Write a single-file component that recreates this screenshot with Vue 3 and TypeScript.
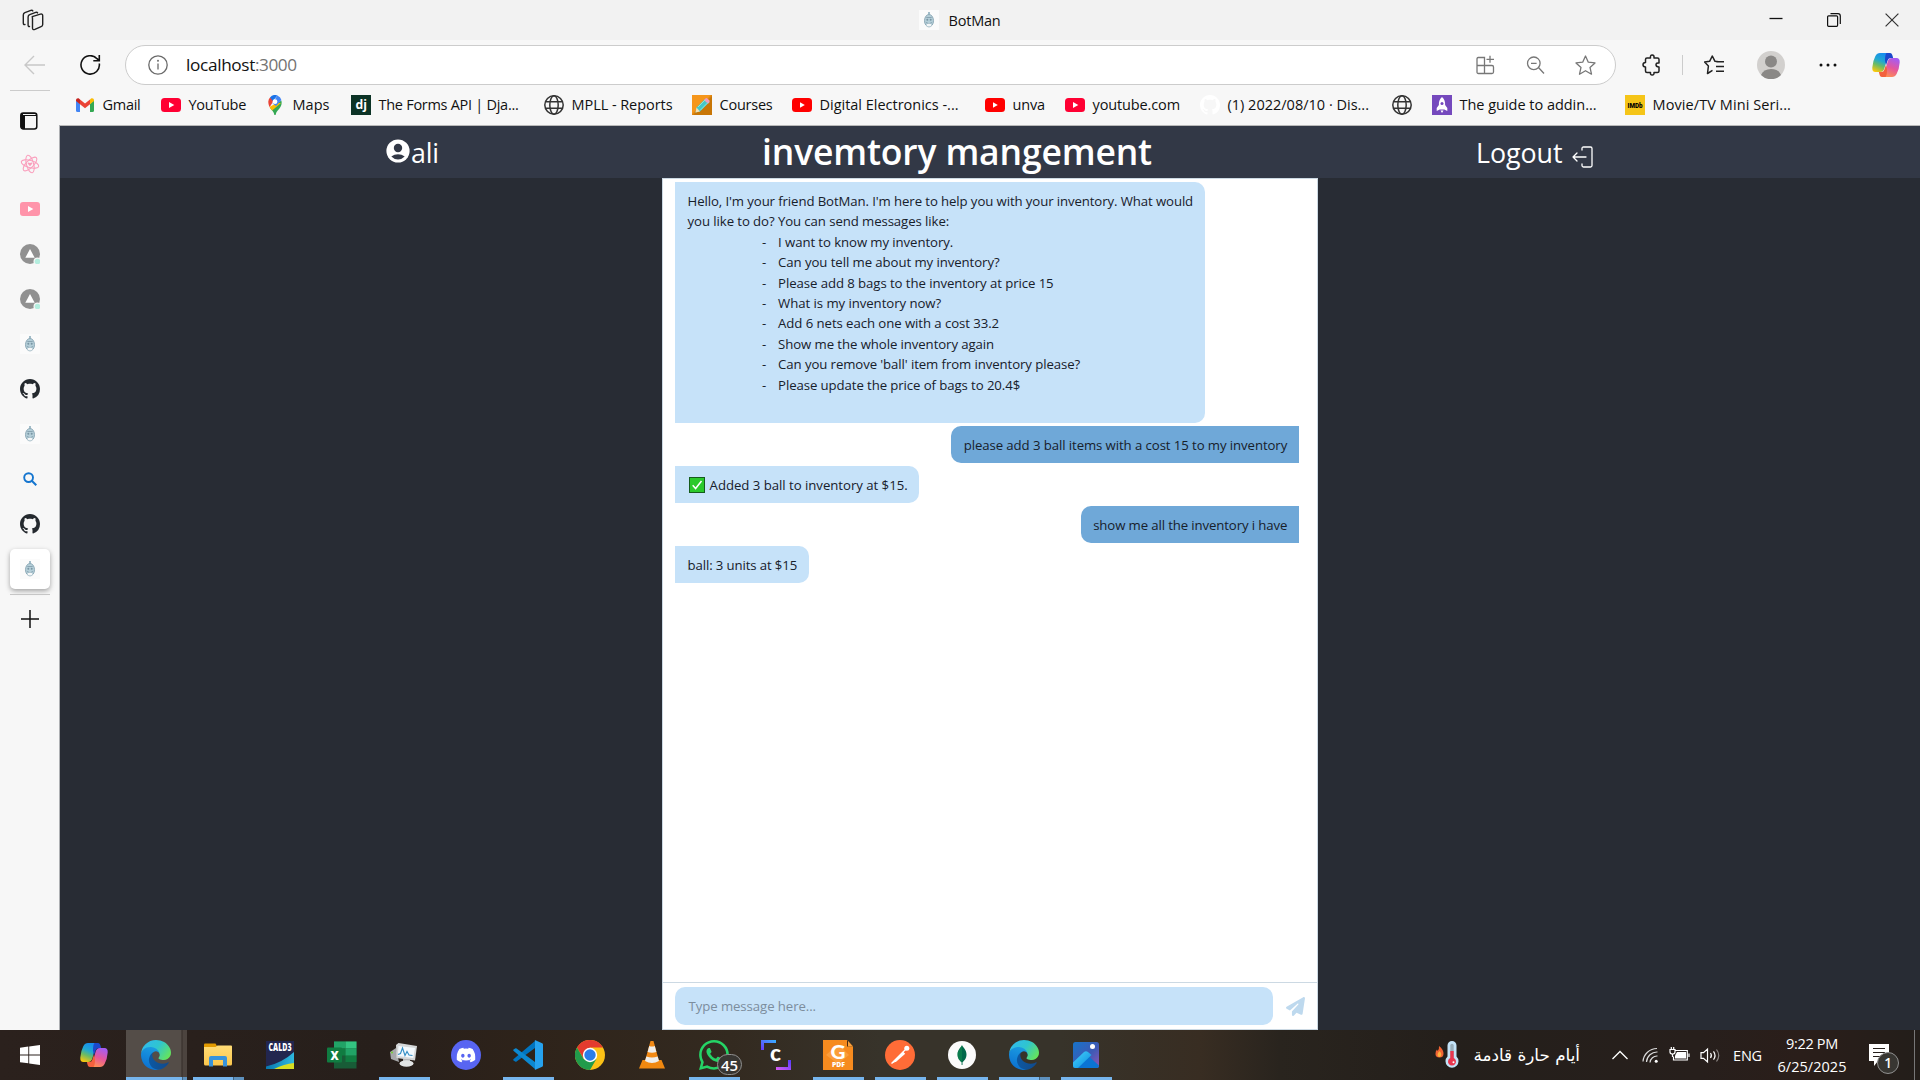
<script setup lang="ts">
interface Bookmark { icon: string; label: string; width: number; text: number }
interface Message { from: 'bot' | 'me'; lines: { text: string; width: number; item?: boolean }[]; check?: boolean; tail?: boolean }
interface Task { icon: string; w: number; h: number; state?: 'open' | 'active' | 'stack' }
interface Glyph { text: string; x: number; y: number; size: number; length: number; weight: number; fill: string; font: string }

/* Adjusts tracking so a label occupies the given number of pixels. */
const vFit = {
  mounted(el: HTMLElement, binding: { value: number }) {
    const length = (el.textContent ?? '').trim().length
    const natural = el.getBoundingClientRect().width
    if (length && binding.value) el.style.letterSpacing = `${(binding.value - natural) / length}px`
  },
}

/* Lettering that sits on top of a logo, in the logo's own pixels. */
const glyphs: Record<string, Glyph[]> = {
  django: [{ text: 'dj', x: 4.5, y: 14.2, size: 13, length: 11.5, weight: 700, fill: '#fff', font: 'Open Sans' }],
  imdb: [{ text: 'IMDb', x: 2.5, y: 12.8, size: 8, length: 15, weight: 900, fill: '#000', font: 'Roboto' }],
  cald: [{ text: 'CALD3', x: 2.5, y: 10, size: 10, length: 23, weight: 800, fill: '#fff', font: 'Open Sans' }],
  excel: [{ text: 'X', x: 3.4, y: 18.5, size: 12.5, length: 8.2, weight: 800, fill: '#fff', font: 'Open Sans' }],
  clip: [{ text: 'c', x: 9, y: 20.5, size: 22, length: 11, weight: 900, fill: '#fff', font: 'Lato' }],
  foxit: [
    { text: 'G', x: 7.5, y: 18.5, size: 19.5, length: 15, weight: 900, fill: '#fff', font: 'Lato' },
    { text: 'PDF', x: 9, y: 27.4, size: 6.2, length: 13, weight: 800, fill: '#fff', font: 'Open Sans' },
  ],
}

const bookmarks: Bookmark[] = [
  { icon: 'gmail', label: 'Gmail', width: 86, text: 38 },
  { icon: 'youtube', label: 'YouTube', width: 104, text: 57.5 },
  { icon: 'maps', label: 'Maps', width: 86, text: 37 },
  { icon: 'django', label: 'The Forms API | Dja...', width: 193, text: 140 },
  { icon: 'globe', label: 'MPLL - Reports', width: 148, text: 101 },
  { icon: 'pencil', label: 'Courses', width: 100, text: 53 },
  { icon: 'youtube-red', label: 'Digital Electronics -...', width: 193, text: 139 },
  { icon: 'youtube-red', label: 'unva', width: 80, text: 32.5 },
  { icon: 'youtube', label: 'youtube.com', width: 135, text: 87.5 },
  { icon: 'github-white', label: '(1) 2022/08/10 · Dis...', width: 192, text: 141.5 },
  { icon: 'globe', label: '', width: 40, text: 0 },
  { icon: 'rocket', label: 'The guide to addin...', width: 193, text: 137 },
  { icon: 'imdb', label: 'Movie/TV Mini Seri...', width: 193, text: 138.5 },
]

const sideTabs = ['tabs', 'react', 'youtube-pink', 'deploy', 'deploy', 'bot', 'github', 'bot', 'search', 'github', 'bot']

const messages: Message[] = [
  {
    from: 'bot',
    tail: true,
    lines: [
      { text: "Hello, I'm your friend BotMan. I'm here to help you with your inventory. What would", width: 505.5 },
      { text: 'you like to do? You can send messages like:', width: 261.5 },
      { text: 'I want to know my inventory.', width: 175, item: true },
      { text: 'Can you tell me about my inventory?', width: 221.5, item: true },
      { text: 'Please add 8 bags to the inventory at price 15', width: 275.5, item: true },
      { text: 'What is my inventory now?', width: 163, item: true },
      { text: 'Add 6 nets each one with a cost 33.2', width: 221, item: true },
      { text: 'Show me the whole inventory again', width: 216, item: true },
      { text: "Can you remove 'ball' item from inventory please?", width: 302, item: true },
      { text: 'Please update the price of bags to 20.4$', width: 242, item: true },
    ],
  },
  { from: 'me', lines: [{ text: 'please add 3 ball items with a cost 15 to my inventory', width: 323.5 }] },
  { from: 'bot', check: true, lines: [{ text: 'Added 3 ball to inventory at $15.', width: 198 }] },
  { from: 'me', lines: [{ text: 'show me all the inventory i have', width: 194 }] },
  { from: 'bot', lines: [{ text: 'ball: 3 units at $15', width: 109.5 }] },
]

const tasks: Task[] = [
  { icon: 'copilot', w: 28, h: 26 },
  { icon: 'edge', w: 30, h: 30, state: 'active' },
  { icon: 'explorer', w: 28, h: 24, state: 'stack' },
  { icon: 'cald', w: 28, h: 28 },
  { icon: 'excel', w: 30, h: 28 },
  { icon: 'monitor', w: 28, h: 28, state: 'open' },
  { icon: 'discord', w: 30, h: 30 },
  { icon: 'vscode', w: 30, h: 30, state: 'open' },
  { icon: 'chrome', w: 30, h: 30 },
  { icon: 'vlc', w: 26, h: 28 },
  { icon: 'whatsapp', w: 30, h: 30, state: 'open' },
  { icon: 'clip', w: 30, h: 30 },
  { icon: 'foxit', w: 30, h: 30, state: 'open' },
  { icon: 'postman', w: 30, h: 30, state: 'open' },
  { icon: 'mongo', w: 28, h: 28, state: 'open' },
  { icon: 'edge', w: 30, h: 30, state: 'stack' },
  { icon: 'photos', w: 26, h: 26, state: 'open' },
]
</script>

<template>
  <div class="screen">
    <svg class="defs" width="0" height="0" aria-hidden="true">
      <defs>
        <linearGradient id="edge-a" x1="0" y1="0" x2="1" y2="0"><stop offset="0" stop-color="#0c59a4" /><stop offset="1" stop-color="#114a8b" /></linearGradient>
        <linearGradient id="edge-b" x1=".6" y1="0" x2=".3" y2="1"><stop offset="0" stop-color="#1b9de2" /><stop offset="1" stop-color="#0b6fd0" /></linearGradient>
        <linearGradient id="edge-c" x1="0" y1=".2" x2="1" y2=".7"><stop offset="0" stop-color="#30b9ef" /><stop offset=".5" stop-color="#2fc5cf" /><stop offset="1" stop-color="#66e45a" /></linearGradient>
        <linearGradient id="cop-a" x1=".6" y1="0" x2=".2" y2="1"><stop offset="0" stop-color="#168bf0" /><stop offset=".4" stop-color="#22a9d0" /><stop offset=".65" stop-color="#6dbb63" /><stop offset="1" stop-color="#ffc809" /></linearGradient>
        <linearGradient id="cop-b" x1=".7" y1="0" x2=".3" y2="1"><stop offset="0" stop-color="#a45cf5" /><stop offset=".5" stop-color="#e5569b" /><stop offset="1" stop-color="#ff9250" /></linearGradient>
        <linearGradient id="clip-a" x1="0" y1="1" x2="1" y2="0"><stop offset="0" stop-color="#6a35ff" /><stop offset="1" stop-color="#35b4ff" /></linearGradient>
        <linearGradient id="clip-b" x1="0" y1="1" x2="1" y2="0"><stop offset="0" stop-color="#dc5df0" /><stop offset="1" stop-color="#523bff" /></linearGradient>
        <linearGradient id="photo-a" x1="0" y1="0" x2="1" y2="1"><stop offset="0" stop-color="#1674ca" /><stop offset=".55" stop-color="#3d5ab5" /><stop offset="1" stop-color="#9155b5" /></linearGradient>
        <linearGradient id="photo-b" x1="0" y1="0" x2="1" y2="1"><stop offset="0" stop-color="#48d3f8" /><stop offset="1" stop-color="#078be2" /></linearGradient>
        <linearGradient id="folder" x1="0" y1="0" x2="0" y2="1"><stop offset="0" stop-color="#ffdc76" /><stop offset="1" stop-color="#fbc74d" /></linearGradient>
        <linearGradient id="cald-a" x1="0" y1="0" x2="1" y2="0"><stop offset="0" stop-color="#0878ae" /><stop offset="1" stop-color="#2eb8df" /></linearGradient>
        <linearGradient id="pencil-bg" x1="0" y1="0" x2="1" y2="1"><stop offset=".45" stop-color="#f5961b" /><stop offset=".55" stop-color="#c87606" /></linearGradient>
      </defs>

      <symbol id="gmail" viewBox="0 0 20 20"><path fill="#4285f4" d="M1 5.500 5 8.700V17H2.500A1.500 1.500 0 0 1 1 15.500z" /><path fill="#34a853" d="M15 8.700l4-3.200v10a1.500 1.500 0 0 1-1.500 1.500H15z" /><path fill="#fbbc04" d="m15 4.500.8-.7C17.200 2.700 19 3.600 19 5.300v.7l-4 3.200z" /><path fill="#c5221f" d="M1 5.300C1 3.600 2.900 2.700 4.200 3.800L5 4.500v4.700L1 6z" /><path fill="#ea4335" d="m5 4.500 5 3.900 5-3.900v4.700l-5 4-5-4z" /></symbol>
      <symbol id="youtube" viewBox="0 0 20 20"><rect y="3" width="20" height="14" rx="3.500" fill="#ff0033" /><path d="m8 7 5.300 3L8 13z" fill="#fff" /></symbol>
      <symbol id="youtube-red" viewBox="0 0 20 20"><rect y="3" width="20" height="14" rx="3.500" fill="#f00" /><path d="m8 7.300 4.800 2.700L8 12.700z" fill="#fff" /></symbol>
      <symbol id="youtube-pink" viewBox="0 0 20 20"><rect y="3" width="20" height="14" rx="3" fill="#ff94aa" /><path d="m8 7 5.300 3L8 13z" fill="#fff" /></symbol>
      <symbol id="maps" viewBox="0 0 20 20"><path fill="#34a853" d="M10 20c.7 0 .8-.7 1-1.600.7-2.700 4.500-5 5.400-8.700.4-1.500.3-3-.1-4.200L5.300 13.200C7 15.500 8.500 16.800 9 18.400c.2.900.3 1.600 1 1.600z" /><path fill="#fbbc04" d="m11.900 7.800-7.400 4.300a12 12 0 0 0 2.600 3.400L16 8z" /><path fill="#ea4335" d="M3.300 6.400c0 2.200.5 4 1.400 5.700l4-6.600L5.200 2.200a6.500 6.500 0 0 0-1.900 4.200z" /><path fill="#1a73e8" d="M5 2.400A6.600 6.600 0 0 1 12.500.5L7.900 6z" /><path fill="#4285f4" d="M12.300.4A6.600 6.600 0 0 1 16.400 5l-5.400 6-3.400-2.800z" /><circle cx="10" cy="6.700" r="2.400" fill="#fff" /></symbol>
      <symbol id="django" viewBox="0 0 20 20"><path fill="#0c3326" d="M0 0h20v20H0z" /></symbol>
      <symbol id="globe" viewBox="0 0 20 20"><g fill="none" stroke="#333" stroke-width="1.500"><circle cx="10" cy="10" r="9.200" /><ellipse cx="10" cy="10" rx="4.200" ry="9.200" /><path d="M1.500 6.700h17M1.500 13.300h17" /></g></symbol>
      <symbol id="pencil" viewBox="0 0 20 20"><path fill="url(#pencil-bg)" d="M0 0h20v20H0z" /><path d="m3.500 17.500 1-5 8.500-8.500 4 3.500-9 9z" fill="#45c7c7" /><path d="m3.500 17.500 1-5 3.500 4z" fill="#f6dcb0" /><path d="m12 5 1.700-1.700q1-.5 2 .4l1.500 1.500q.9 1 .2 2L16 8.700z" fill="#ee9dc0" /><path d="m6 12 7-7M8 15.500l8-8" stroke="#8be6dc" /></symbol>
      <symbol id="github" viewBox="0 0 16 16"><path fill="currentColor" d="M8 0C3.580 0 0 3.580 0 8c0 3.540 2.290 6.530 5.470 7.590.4.070.55-.17.55-.38 0-.19-.01-.82-.01-1.490-2.010.37-2.530-.49-2.690-.94-.09-.23-.48-.94-.82-1.130-.28-.15-.68-.52-.01-.53.63-.01 1.080.58 1.230.82.72 1.210 1.870.87 2.330.66.07-.52.28-.87.51-1.070-1.780-.2-3.640-.89-3.640-3.950 0-.87.31-1.590.82-2.150-.08-.2-.36-1.020.08-2.120 0 0 .67-.21 2.200.82.64-.18 1.320-.27 2-.27.68 0 1.360.09 2 .27 1.530-1.040 2.200-.82 2.200-.82.44 1.100.16 1.920.08 2.120.51.56.82 1.270.82 2.150 0 3.070-1.870 3.750-3.650 3.950.29.25.54.73.54 1.480 0 1.070-.01 1.930-.01 2.200 0 .21.15.46.55.38A8.013 8.013 0 0016 8c0-4.420-3.580-8-8-8z" /></symbol>
      <symbol id="github-white" viewBox="0 0 16 16"><use href="#github" color="#fff" /></symbol>
      <symbol id="rocket" viewBox="0 0 20 20"><path fill="#7549bd" d="M0 0h20v20H0z" /><path fill="#fff" d="M10 2c2.600 2.300 3.300 5 3.100 8l2.200 3v3l-3-1.500H7.700l-3 1.500v-3L6.900 10C6.700 7 7.400 4.300 10 2zM8.500 15.500h3L10 18z" /><circle cx="10" cy="8.500" r="1.500" fill="#7549bd" /></symbol>
      <symbol id="imdb" viewBox="0 0 20 20"><path fill="#f5c518" d="M0 0h20v20H0z" /></symbol>
      <symbol id="bot" viewBox="0 0 20 20"><path fill="#fbfbfb" d="M0 0h20v20H0z" /><path d="M10 2v3" stroke="#8caebd" stroke-width="1.600" /><ellipse cx="10" cy="10.700" rx="4.500" ry="6.200" fill="#b4ced8" stroke="#8fabb8" stroke-width="1" /><path d="M7.300 7.500h5.400M7 12.500q3 2.500 6 0" fill="none" stroke="#7c99a8" stroke-width=".8" /><circle cx="8.300" cy="9.700" r="1" fill="#7895a4" /><circle cx="11.700" cy="9.700" r="1" fill="#7895a4" /><ellipse cx="10" cy="15" rx="2.500" ry="1.500" fill="#f4f7f8" /></symbol>
      <symbol id="tabs" viewBox="0 0 20 20"><rect x="1.800" y="2" width="16" height="16" rx="2.500" fill="none" stroke="#111" stroke-width="1.500" /><path d="M2 4q0-2 2-2h12q2 0 2 2v1H6v13H4q-2 0-2-2z" fill="#111" /><path d="M4 3.500h12.500" stroke="#f7f7f7" stroke-width="1" /></symbol>
      <symbol id="react" viewBox="0 0 20 20"><g fill="none" stroke="#fa9fbd" stroke-width="1.100"><ellipse cx="10" cy="10" rx="9" ry="3.600" transform="rotate(15 10 10)" /><ellipse cx="10" cy="10" rx="9" ry="3.600" transform="rotate(75 10 10)" /><ellipse cx="10" cy="10" rx="9" ry="3.600" transform="rotate(135 10 10)" /></g><path d="M10 12.200 7.600 9.600q.2-1.700 2.400-.5 2.200-1.200 2.400.5z" fill="#fa9fbd" /></symbol>
      <symbol id="deploy" viewBox="0 0 20 20"><circle cx="10" cy="10" r="10" fill="#919191" /><path d="m10 5 4.700 8.800H5.300z" fill="#fff" /><circle cx="17.500" cy="17.500" r="4" fill="#f7f7f7" /><circle cx="17.500" cy="17.500" r="2.800" fill="#b5eedf" /></symbol>
      <symbol id="search" viewBox="0 0 20 20"><circle cx="8.600" cy="8.600" r="4.400" fill="none" stroke="#1475cf" stroke-width="1.900" /><path d="m12 12 4.300 4.300" stroke="#1475cf" stroke-width="2" /></symbol>

      <symbol id="copilot" viewBox="0 0 28 26"><path fill="url(#cop-a)" d="M8 1h10.500q-2 0-3 3.500l-3 11.500q-1 4-4.500 4H3.500Q0 20 .3 15.500.8 9 3.300 4.300 5 1 8 1z" /><path fill="#1b48cc" d="M14.500 1h3.300c2.200 0 2.700 2 3.300 5h-2.500q-2.300 0-3 2.500L14 13.500l-1-5q0-6 1.500-7.500z" /><path fill="url(#cop-b)" d="M20 25H9.500q2 0 3-3.500l3-11.500q1-4 4.500-4h4.500q3.500 0 3.200 4.500-.5 6.500-3 11.200Q23 25 20 25z" /><path fill="#f3613e" d="M13.500 25h-3.300c-2.200 0-2.700-2-3.300-5h2.500q2.300 0 3-2.500l1.600-5 1 5q0 6-1.500 7.500z" /></symbol>
      <symbol id="edge" viewBox="0 0 256 256"><path fill="url(#edge-a)" d="M231 190.500c-3.400 1.800-6.900 3.400-10.500 4.700a101.500 101.500 0 0 1-35.900 6.500c-47.300 0-88.500-32.500-88.500-74.300.1-11.400 6.400-21.900 16.400-27.300-42.800 1.800-53.800 46.400-53.800 72.500 0 74 68.100 81.400 82.800 81.400 7.900 0 19.800-2.300 27-4.600l1.300-.4a128.300 128.300 0 0 0 66.600-52.800 4 4 0 0 0-5.400-5.700z" /><path fill="url(#edge-b)" d="M105.700 241.400a79.200 79.200 0 0 1-22.700-21.300 80.700 80.700 0 0 1 29.500-120c3.200-1.500 8.500-4.100 15.600-4a32.400 32.400 0 0 1 25.700 13 31.900 31.900 0 0 1 6.300 18.700c0-.2 24.500-79.600-80-79.600-43.900 0-80 41.600-80 78.200a130.200 130.200 0 0 0 12.100 56 128 128 0 0 0 156.400 67 75.500 75.500 0 0 1-62.800-8z" /><path fill="url(#edge-c)" d="M152.300 148.900c-.9 1-3.400 2.500-3.400 5.600 0 2.600 1.700 5.200 4.800 7.300 14.300 10 41.400 8.600 41.500 8.600a59.600 59.600 0 0 0 30.300-8.300 61.400 61.400 0 0 0 30.400-52.900c.3-22.400-8-37.300-11.300-43.900C223.500 23.900 177.700 0 128 0A128 128 0 0 0 0 126.200c.5-36.500 36.800-66 80-66 3.500 0 23.500.3 42 10.100 16.300 8.600 24.900 18.900 30.800 29.200 6.200 10.700 7.300 24.100 7.300 29.500s-2.700 13.300-7.800 19.900z" /></symbol>
      <symbol id="explorer" viewBox="0 0 28 24"><path fill="#e29a00" d="M0 1.500Q0 .5 1 .5h10.500l2 3.500H0z" /><path fill="url(#folder)" d="M0 4h11.500l2-1.500H27q1 0 1 1V21q0 1.500-1.500 1.500h-25Q0 22.500 0 21z" /><path fill="#3793db" d="M5 15q0-2 2-2h14q2 0 2 2v8.500h-4V17H9v6.500H5z" /></symbol>
      <symbol id="cald" viewBox="0 0 28 28"><path fill="#22264f" d="M0 0h28v28H0z" /><path fill="url(#cald-a)" d="M0 25.500Q16 22 28 11v12q-10 2-17 5H0z" /><path fill="#d7dd22" d="M8 28q10-5 20-6v6z" /></symbol>
      <symbol id="excel" viewBox="0 0 30 28"><path fill="#185c37" d="M7 .5h22.500v27H7z" /><path fill="#21a366" d="M7 .5h11.500v7H7z" /><path fill="#33c481" d="M18.500.5h11v7h-11z" /><path fill="#107c41" d="M7 7.500h11.500v7H7zM18.500 14.500h11v6.500h-11z" /><path fill="#21a366" d="M18.500 7.500h11v7h-11z" /><rect y="6.500" width="15" height="15" rx="1" fill="#107c41" /></symbol>
      <symbol id="monitor" viewBox="0 0 28 28"><path fill="#a7a9ab" d="m0 11 6-4 3 14-8-3z" /><path fill="#d5d7d8" d="m6 4 2.500-2L27 5l-2 14.500L6.500 17z" /><path fill="#f3f9fd" d="m8.500 5 16.500 2-1.700 10L7.800 15z" /><path fill="none" stroke="#338ec5" stroke-width="1.100" d="m8 13.500 2.500-1 2-5.500 2.500 7.500 2-4 2 3.500 3.500.5" /><path fill="#b4b7b8" d="M13 18h7v4h-7z" /><ellipse cx="16.500" cy="22.500" rx="7" ry="3.300" fill="#e2e4e5" /><circle cx="2" cy="11.500" r="1" fill="#71d42d" /></symbol>
      <symbol id="discord" viewBox="0 0 30 30"><circle cx="15" cy="15" r="15" fill="#5865f2" /><svg x="5.500" y="5.500" width="19" height="19" viewBox="0 0 16 16"><path fill="#fff" d="M13.545 2.907a13.227 13.227 0 0 0-3.257-1.011.05.05 0 0 0-.052.025c-.141.25-.297.577-.406.833a12.190 12.190 0 0 0-3.658 0 8.258 8.258 0 0 0-.412-.833.051.051 0 0 0-.052-.025c-1.125.194-2.220.534-3.257 1.011a.041.041 0 0 0-.021.018C.356 6.024-.213 9.047.066 12.032c.001.014.01.028.021.037a13.276 13.276 0 0 0 3.995 2.020.05.05 0 0 0 .056-.019c.308-.42.582-.863.818-1.329a.05.05 0 0 0-.028-.07 8.875 8.875 0 0 1-1.248-.595.05.05 0 0 1-.005-.085c.084-.063.168-.129.248-.195a.05.05 0 0 1 .051-.007c2.619 1.196 5.454 1.196 8.041 0a.052.052 0 0 1 .053.007c.08.066.164.132.248.195a.051.051 0 0 1-.004.085 8.254 8.254 0 0 1-1.249.594.05.05 0 0 0-.027.071c.24.465.515.909.817 1.329a.05.05 0 0 0 .056.019 13.235 13.235 0 0 0 4.001-2.020.049.049 0 0 0 .021-.037c.334-3.451-.559-6.449-2.366-9.106a.034.034 0 0 0-.020-.019Zm-8.198 7.307c-.789 0-1.438-.724-1.438-1.612 0-.889.637-1.613 1.438-1.613.807 0 1.450.73 1.438 1.613 0 .888-.637 1.612-1.438 1.612Zm5.316 0c-.788 0-1.438-.724-1.438-1.612 0-.889.637-1.613 1.438-1.613.807 0 1.451.73 1.438 1.613 0 .888-.631 1.612-1.438 1.612Z" /></svg></symbol>
      <symbol id="vscode" viewBox="0 0 30 30"><path fill="#0074bf" d="M.4 19.200 22 1v7L3.600 21.500q-.8.500-1.500 0L.5 20.500q-.5-.6-.1-1.300z" /><path fill="#0c88d0" d="M.4 10.800 22 29v-7L3.600 8.500q-.8-.5-1.500 0L.5 9.500q-.5.600-.1 1.300z" /><path fill="#26a2ee" d="m21.800 0 7.400 3.200q.8.500.8 1.300v21q0 .8-.8 1.300L21.800 30q.2-.5.200-2V2q0-1.500-.2-2z" /></symbol>
      <symbol id="chrome" viewBox="0 0 30 30"><circle cx="15" cy="15" r="15" fill="#fbc116" /><path fill="#e33b2e" d="M2 7.500A15 15 0 0 1 28 7.500H15l-6.500 11z" /><path fill="#219b4b" d="M2 7.500a15 15 0 0 0 13 22.500l6.500-11.300L15 22l-6.500-3.300z" /><circle cx="15" cy="15" r="7.200" fill="#fff" /><circle cx="15" cy="15" r="5.700" fill="#2b7de9" /></symbol>
      <symbol id="vlc" viewBox="0 0 26 28"><path fill="#f08810" d="M3.500 19h19L26 27.500H0z" /><path fill="#f28a15" d="M11.500 0h3L20 20q-7 3.500-14 0z" /><path fill="#eeeeec" d="m10.200 5-1.600 6q4.400 1.500 8.800 0l-1.600-6q-2.800 1-5.600 0zM7.300 15.500 6 20q7 4 14 0l-1.300-4.500q-5.700 2-11.400 0z" /></symbol>
      <symbol id="whatsapp" viewBox="0 0 16 16"><path fill="#25d366" d="M13.601 2.326A7.854 7.854 0 0 0 7.994 0C3.627 0 .068 3.558.064 7.926c0 1.399.366 2.760 1.057 3.965L0 16l4.204-1.102a7.933 7.933 0 0 0 3.790.965h.004c4.368 0 7.926-3.558 7.930-7.930A7.898 7.898 0 0 0 13.600 2.326zM7.994 14.521a6.573 6.573 0 0 1-3.356-.92l-.24-.144-2.494.654.666-2.433-.156-.251a6.560 6.560 0 0 1-1.007-3.505c0-3.626 2.957-6.584 6.591-6.584a6.560 6.560 0 0 1 4.660 1.931 6.557 6.557 0 0 1 1.928 4.660c-.004 3.639-2.961 6.592-6.592 6.592zm3.615-4.934c-.197-.099-1.170-.578-1.353-.646-.182-.065-.315-.099-.445.099-.133.197-.513.646-.627.775-.114.133-.232.148-.43.05-.197-.1-.836-.308-1.592-.985-.59-.525-.985-1.175-1.103-1.372-.114-.198-.011-.304.088-.403.087-.088.197-.232.296-.346.1-.114.133-.198.198-.33.065-.134.034-.248-.015-.347-.05-.099-.445-1.076-.612-1.470-.16-.389-.323-.335-.445-.34-.114-.007-.247-.007-.38-.007a.729.729 0 0 0-.529.247c-.182.198-.691.677-.691 1.654 0 .977.710 1.916.810 2.049.098.133 1.394 2.132 3.383 2.992.47.205.84.326 1.129.418.475.152.904.129 1.246.08.38-.058 1.171-.48 1.338-.943.164-.464.164-.86.114-.992-.049-.133-.182-.2-.38-.299z" /></symbol>
      <symbol id="clip" viewBox="0 0 30 30"><path fill="url(#clip-a)" d="M0 0h15v3H3v7H0z" /><path fill="url(#clip-b)" d="M15 30v-3h12v-7h3v10z" /></symbol>
      <symbol id="foxit" viewBox="0 0 30 30"><path fill="#f68b1f" d="M0 0h24l6 6.500V30H0z" /><path fill="#ffad52" d="m15 4 11 11-11 9L3 15z" opacity=".55" /><path fill="#4a2c10" d="M24 0v6.500h6z" /><path fill="#f9a03b" d="m25 1 5 5.500h-5z" /></symbol>
      <symbol id="postman" viewBox="0 0 30 30"><circle cx="15" cy="15" r="15" fill="#ff6c37" /><circle cx="21.800" cy="8.200" r="2.500" fill="#fff" /><path d="m8.500 21 9.500-9.500 2.200 2.200-8.500 7.500-5 2.500z" fill="#fff" /><path d="m9 20.500 8.500-8.500" stroke="#ff6c37" stroke-width=".7" /><path d="m6.500 23.500 14-14" stroke="#fff" stroke-width="1.300" /></symbol>
      <symbol id="mongo" viewBox="0 0 28 28"><circle cx="14" cy="14" r="14" fill="#fbfbfb" /><path fill="#00684a" d="M14 4c.8 2.500 4.500 4.500 4.500 9.500 0 4-2.500 6.500-4 7.800V24h-.9v-2.700c-1.600-1.300-4.100-3.800-4.100-7.800C9.500 8.500 13.200 6.500 14 4z" /><path fill="#118d4d" d="M14 4v17.500c-2-1.500-4.500-4-4.500-8S13.200 6.500 14 4z" opacity=".5" /></symbol>
      <symbol id="photos" viewBox="0 0 26 26"><rect width="26" height="26" rx="2.500" fill="url(#photo-a)" /><path fill="#0a74d3" d="m12 11 14 12.500q0 2.500-2.500 2.500h-21z" /><path fill="url(#photo-b)" d="M0 20.500 11 10q2-1.500 4 0l3.500 3L5 26H2.500Q0 26 0 23.500z" /><circle cx="19.500" cy="4.500" r="2.500" fill="#fff" /></symbol>
    </svg>

    <header class="titlebar">
      <svg class="stack" width="22" height="22" viewBox="0 0 22 22" fill="none" stroke="#222" stroke-width="1.400" stroke-linejoin="round" stroke-linecap="round"><path d="m10.200 7.600 8.200-2.500q2.300-.6 2.300 1.700v8.700q0 1.700-1.600 2.200l-6.200 2.700q-2.400.9-2.400-1.500V10q0-1.800-.3-2.400z" /><path d="M7.500 17.500q-1.400.2-1.400-1.500V8q0-1.700 1.600-2.300l6-2.300q1.400-.4 1.900.5" /><path d="M3 15.500q-1.700.5-1.700-1.500V6q0-1.700 1.600-2.300l6-2.300q1.400-.4 1.900.5" /></svg>
      <div class="page-title"><svg width="20" height="20"><use href="#bot" /></svg><span v-fit="52">BotMan</span></div>
      <div class="window-buttons">
        <svg width="14" height="14" viewBox="0 0 14 14" stroke="#111" fill="none"><path d="M.5 5.500h13" stroke-width="1.300" /></svg>
        <svg width="14" height="14" viewBox="0 0 14 14" stroke="#111" fill="none" stroke-width="1.200"><rect x=".6" y="2.800" width="10" height="10.500" rx="1" /><path d="M3.500.7H11q2.300 0 2.300 2.300v8" /></svg>
        <svg width="14" height="14" viewBox="0 0 14 14" stroke="#333" fill="none" stroke-width="1.200"><path d="m.6.600 12.800 12.800M13.400.6.600 13.400" /></svg>
      </div>
    </header>

    <div class="toolbar">
      <svg width="22" height="20" viewBox="0 0 22 20" fill="none" stroke="#c8c8c8" stroke-width="1.400"><path d="M21 10H1.500M10 1 1 10l9 9" /></svg>
      <svg class="reload" width="21" height="20" viewBox="0 0 21 20" fill="none" stroke="#111" stroke-width="1.600"><path d="M19.300 8.500A9.200 9.200 0 1 1 17 3.700l2.300 2M19.300 0v5.800h-6" /></svg>
      <div class="address">
        <svg width="20" height="20" viewBox="0 0 20 20" fill="none" stroke="#6a6a6a" stroke-width="1.300"><circle cx="10" cy="10" r="9.200" /><path d="M10 8.500v6" /><circle cx="10" cy="5.800" r=".4" /></svg>
        <span class="url"><span v-fit="69">localhost</span><span v-fit="41.500" class="port">:3000</span></span>
        <svg class="apps" width="19" height="20" viewBox="0 0 19 20" fill="none" stroke="#777" stroke-width="1.300"><path d="M2.200 2.500h6.300v16H2.500q-1.500 0-1.500-1.500V4q0-1.500 1.200-1.500zM1 10.500h15q1.500 0 1.500 1.500v5q0 1.500-1.500 1.500H8.500M14 .8v7M10.500 4.300h7.500" /></svg>
        <svg class="lens" width="19" height="19" viewBox="0 0 19 19" fill="none" stroke="#777" stroke-width="1.300"><circle cx="7.800" cy="7.300" r="6.300" /><path d="m12.500 11.500 5.500 6M5 7.300h5.600" /></svg>
        <svg width="21" height="21" viewBox="0 0 21 21" fill="none" stroke="#777" stroke-width="1.300" stroke-linejoin="round"><path d="m10.500 1 2.800 6.200 6.700.7-5 4.500 1.500 6.800-6-3.500-6 3.500L6 12.400 1 7.900l6.700-.7z" /></svg>
      </div>
      <svg class="puzzle" width="20" height="22" viewBox="0 0 20 22" fill="none" stroke="#222" stroke-width="1.500" stroke-linejoin="round"><path d="M5 4h3.500q-.5-3 1.700-3T12 4h3.500q1.500 0 1.500 1.500V9q-3-.4-3 1.800T17 13v4q0 1.500-1.500 1.500H12q.300 2.500-1.800 2.500T8.500 18.500H5q-1.500 0-1.500-1.500v-4Q1 13 1 10.800T3.500 8.500v-3Q3.500 4 5 4z" /></svg>
      <i class="divider"></i>
      <svg class="favorites" width="20" height="20" viewBox="0 0 20 20" fill="none" stroke="#222" stroke-width="1.500" stroke-linejoin="round"><path d="M14.500 6.800 11 6.300 8.300 1 5.600 6.300l-5 .8L4.400 11l-.9 7.500 5-3.200M12.500 6.800H20M12 11.500h8M12 16.200h8" /></svg>
      <svg class="avatar" width="28" height="28" viewBox="0 0 28 28"><circle cx="14" cy="14" r="14" fill="#d2d0ce" /><circle cx="14" cy="10.500" r="6" fill="#8a8886" /><path d="M4 24q2.500-6 10-6t10 6a14 14 0 0 1-20 0z" fill="#8a8886" /></svg>
      <svg class="dots" width="18" height="6" viewBox="0 0 18 6" fill="#111"><circle cx="2" cy="3" r="1.500" /><circle cx="9" cy="3" r="1.500" /><circle cx="16" cy="3" r="1.500" /></svg>
      <svg class="assist" width="28" height="28"><use href="#copilot" /></svg>
    </div>

    <div class="workspace">
      <aside class="rail">
        <div v-for="(name, i) in sideTabs" :key="i" class="rail-tab" :class="{ current: i === sideTabs.length - 1 }">
          <svg width="20" height="20"><use :href="'#' + name" /></svg>
        </div>
        <i class="rule"></i>
        <svg class="plus" width="18" height="18" viewBox="0 0 18 18" stroke="#111" stroke-width="1.500"><path d="M0 9h18M9 0v18" /></svg>
      </aside>

      <div class="column">
        <nav class="bookmarks">
          <a v-for="(b, i) in bookmarks" :key="i" :style="{ width: b.width + 'px' }">
            <svg width="20" height="20"><use :href="'#' + b.icon" /><text v-for="g in glyphs[b.icon]" :key="g.text" :x="g.x" :y="g.y" :font-size="g.size" :font-weight="g.weight" :font-family="g.font" :fill="g.fill" :textLength="g.length" lengthAdjust="spacingAndGlyphs">{{ g.text }}</text></svg>
            <span v-if="b.label" v-fit="b.text">{{ b.label }}</span>
          </a>
        </nav>

        <main class="page">
          <div class="app-header">
            <div class="user">
              <svg width="24" height="24" viewBox="0 0 24 24"><circle cx="12" cy="12" r="11.600" fill="#fff" /><circle cx="12" cy="9" r="4.200" fill="#323846" /><path d="M5.300 17.600q3-2.300 6.700-2.300t6.700 2.300Q16 20.500 12 20.500t-6.700-2.900z" fill="#323846" /></svg><span v-fit="28">ali</span>
            </div>
            <h1><span v-fit="390">invemtory mangement</span></h1>
            <div class="logout">
              <span v-fit="86.500">Logout</span>
              <svg width="21" height="22" viewBox="0 0 21 22" fill="none" stroke="#fff" stroke-width="1.300" stroke-linecap="round" stroke-linejoin="round"><path d="M10 4V2.500Q10 1 11.500 1h7Q20 1 20 2.500v17q0 1.500-1.500 1.500h-7q-1.500 0-1.500-1.500V18M14 11H1M5 7l-4 4 4 4" /></svg>
            </div>
          </div>

          <section class="chat">
            <div class="messages">
              <div v-for="(m, i) in messages" :key="i" class="bubble" :class="m.from">
                <p v-for="(line, j) in m.lines" :key="j" :class="{ item: line.item }">
                  <i v-if="line.item" class="dash">-</i>
                  <svg v-if="m.check" class="check" width="16" height="16" viewBox="0 0 16 16"><rect x=".5" y=".5" width="15" height="15" fill="#2bc92b" stroke="#155c1c" /><path d="m3.700 8.300 2.900 3.200L12.500 4" fill="none" stroke="#fff" stroke-width="1.500" /></svg>
                  <span v-fit="line.width">{{ line.text }}</span>
                </p>
                <p v-if="m.tail">&nbsp;</p>
              </div>
            </div>
            <div class="composer">
              <div class="field"><span v-fit="127.500">Type message here...</span></div>
              <svg width="19" height="19" viewBox="0 0 512 512" fill="#bed9ee"><path d="M498.100 5.600c10.100 7 15.400 19.100 13.500 31.200l-64 416c-1.500 9.700-7.400 18.200-16 23s-18.900 5.400-28 1.600L284 427.700l-68.500 74.100c-8.900 9.700-22.900 12.900-35.200 8.100S160 493.200 160 480V396.400c0-4 1.500-7.800 4.200-10.700L331.800 202.800c5.800-6.300 5.600-16-.4-22s-15.700-6.400-22-.7L106 360.800 17.700 316.600C7.100 311.300.3 300.700 0 288.900s5.900-22.800 16.100-28.700l448-256c10.700-6.100 23.900-5.500 34 1.400z" /></svg>
            </div>
          </section>
        </main>
      </div>
    </div>

    <footer class="taskbar">
      <div class="start"><svg width="20" height="20" viewBox="0 0 20 20" fill="#fff"><path d="M0 2.800 8.300 1.600v7.900H0zM9.200 1.500 20 0v9.500H9.200zM0 10.400h8.300v7.900L0 17.200zM9.200 10.400H20V20L9.200 18.400z" /></svg></div>
      <div v-for="(t, i) in tasks" :key="i" class="task" :class="t.state">
        <svg :width="t.w" :height="t.h"><use :href="'#' + t.icon" /><text v-for="g in glyphs[t.icon]" :key="g.text" :x="g.x" :y="g.y" :font-size="g.size" :font-weight="g.weight" :font-family="g.font" :fill="g.fill" :textLength="g.length" lengthAdjust="spacingAndGlyphs">{{ g.text }}</text></svg>
        <b v-if="t.icon === 'whatsapp'" class="count">45</b>
      </div>
      <div class="tray">
        <svg class="weather" width="24" height="28" viewBox="0 0 24 28"><path d="M4 5q4 3 4.500 7 .3 4.500-4 4.500T.5 12.500Q.5 10 2 8.500L2.500 10Q4.500 7.500 4 5z" fill="#f06434" /><path d="M4.500 10q2 2 1.800 4-.5 2-2 2t-1.800-2q0-2 2-4z" fill="#fdb13d" /><path d="M12.500 4.500a4.500 4.500 0 0 1 9 0v11a6.500 6.500 0 1 1-9 0z" fill="#c3e3f8" /><path d="M15.300 4.500a1.700 1.700 0 0 1 3.400 0v12.800h-3.400z" fill="#98aebb" /><path d="M15.300 10h3.400v7a4 4 0 1 1-3.400 0z" fill="#e9364f" /><circle cx="18.500" cy="21.300" r="1" fill="#fff" /></svg>
        <span class="forecast" dir="rtl">أيام حارة قادمة</span>
        <svg class="chevron" width="16" height="10" viewBox="0 0 16 10" fill="none" stroke="#fff" stroke-width="1.300"><path d="m.5 9 7.500-7.500L15.500 9" /></svg>
        <svg class="wifi" width="17" height="17" viewBox="0 0 17 17" fill="none" stroke="#ddd" stroke-width="1.200"><path d="M1 14.500A14 14 0 0 1 15 1.500M4.500 15A10.500 10.500 0 0 1 15.500 5M8 15.500A7 7 0 0 1 15.500 9" /><circle cx="14.200" cy="14.200" r="1.500" fill="#fff" stroke="none" /></svg>
        <svg class="battery" width="21" height="16" viewBox="0 0 21 16" fill="none" stroke="#fff" stroke-width="1.200"><path d="M6.500 3.500h11.800V13H4.500V9.500M20 6.500v3.500M1 2.500h5V5Q6 7 3.500 7T1 5zM2.300 0v2.500M4.700 0v2.500M3.500 7v3" /><path d="M8 5h9v6.500H6V8.500z" fill="#fff" stroke="none" /></svg>
        <svg class="speaker" width="21" height="17" viewBox="0 0 21 17" fill="none" stroke="#fff" stroke-width="1.200"><path d="M1 5.700h2.500L7.500 2v13l-4-3.700H1zM10.500 6q1.800 2.500 0 5M13.500 4.300q3 4.200 0 8.400" /><path d="M16.500 2.500q4.500 6 0 12" opacity=".45" /></svg>
        <span v-fit="29" class="lang">ENG</span>
        <div class="clock"><span v-fit="52">9:22 PM</span><span v-fit="69">6/25/2025</span></div>
        <div class="notice"><svg width="20" height="22" viewBox="0 0 20 22"><path d="M0 0h20v17H9l-4 5v-5H0z" fill="#fff" /><path d="M4 4.500h12M4 8.500h12M4 12.500h8" stroke="#251e1b" stroke-width="1.200" /></svg><b class="count">1</b></div>
        <i class="peek"></i>
      </div>
    </footer>
  </div>
</template>

<style>
body { overflow: hidden; }
</style>

<style scoped>
* { box-sizing: border-box; }
.screen { width: 1920px; height: 1080px; display: flex; flex-direction: column; overflow: hidden; background: #f7f7f7; color: #111; font-family: "Open Sans", "Noto Sans", sans-serif; font-size: 14.5px; }
.screen > .defs { position: absolute; }
svg { display: block; flex: none; }
span { white-space: nowrap; }

.titlebar { height: 40px; flex: none; display: flex; align-items: center; background: #f2f2f2; padding: 0 21.5px 0 21.5px; }
.page-title { flex: 1; display: flex; align-items: center; gap: 9.5px; padding-left: 875.5px; }
.window-buttons { display: flex; gap: 43.7px; }

.toolbar { height: 45px; flex: none; display: flex; align-items: center; padding: 5px 20px 0 24px; }
.reload { margin: 0 24px 0 34px; }
.address { width: 1491px; height: 40px; flex: none; display: flex; align-items: center; border: 1px solid #ccc; border-radius: 20px; background: #fff; padding: 0 19.5px 0 21.5px; }
.url { flex: 1; display: flex; padding-left: 18.5px; font-size: 17.2px; line-height: 24px; }
.port { color: #737373; }
.apps { margin-right: 30.5px; }
.lens { margin-right: 30px; }
.puzzle { margin-left: 26px; }
.divider { width: 1.5px; height: 20px; background: #ccc; margin: 0 20.5px 0 20px; }
.avatar { margin-left: 33px; }
.dots { margin-left: 34.5px; }
.assist { margin-left: 35px; }

.workspace { flex: 1; min-height: 0; display: flex; }
.rail { width: 60px; flex: none; position: relative; display: flex; flex-direction: column; align-items: center; gap: 5px; padding-top: 16px; }
.rail::before { content: ""; position: absolute; top: 5px; left: 10px; width: 40px; height: 1px; background: #ccc; }
.rail::after { content: ""; position: absolute; top: 40px; bottom: 0; right: 0; width: 1px; background: #aeb0b3; }
.rail-tab { width: 40px; height: 40px; flex: none; display: flex; align-items: center; justify-content: center; border-radius: 5px; color: #24292e; }
.rail-tab:first-of-type { padding-right: 2px; margin-bottom: -2px; }
.current { background: #fff; box-shadow: 0 2px 5px rgba(0, 0, 0, .35); }
.rule { width: 40px; height: 1px; background: #c6c6c6; margin-bottom: 10px; }
.plus { margin-right: 1px; }
.column { flex: 1; min-width: 0; display: flex; flex-direction: column; }

.bookmarks { height: 41px; flex: none; display: flex; align-items: center; padding-left: 15px; border-bottom: 1px solid #b9b9b9; }
.bookmarks a { display: flex; flex: none; align-items: center; gap: 7.5px; height: 30px; line-height: 20px; }

.page { flex: 1; min-height: 0; display: flex; flex-direction: column; align-items: center; background: #282c34; }
.app-header { align-self: stretch; height: 52px; flex: none; display: flex; align-items: center; background: #323846; color: #fff; padding: 0 327px 0 326px; font-size: 26.8px; line-height: 36px; }
.user { display: flex; align-items: center; width: 376px; gap: 1px; }
.user svg { margin-top: -2px; }
.user span { margin-top: 1px; }
h1 { flex: 1; margin: -3px 0 0; font-size: 35.5px; line-height: 44px; font-weight: 600; }
.logout { display: flex; align-items: center; gap: 9.5px; }
.logout span { margin-top: 2px; }
.logout svg { margin-top: 9px; }

.chat { width: 656px; flex: 1; min-height: 0; display: flex; flex-direction: column; background: #fff; border: 1px solid #ccd9e3; font-size: 13.2px; line-height: 20.4px; color: #17202b; }
.messages { flex: 1; display: flex; flex-direction: column; align-items: flex-start; gap: 3px; padding: 3px 18px 0 12px; }
.bubble { background: #c6e2f9; border-radius: 0 10px 10px 0; padding: 9px 11.8px 7.6px 12.6px; }
.bubble.me { align-self: flex-end; background: #6fa8d8; border-radius: 10px 0 0 10px; }
.bubble p { margin: 0; display: flex; align-items: center; height: 20.4px; }
.bubble .item { padding-left: 74.500px; }
.dash { width: 16px; font-style: normal; }
.check { margin: 0 5px 0 1px; }
.composer { height: 47px; flex: none; display: flex; align-items: center; gap: 13px; padding: 0 12px; border-top: 1px solid #ccd9e3; }
.field { width: 599.500px; height: 38px; border-radius: 10px; background: #c6e2f9; color: #7c8d9d; display: flex; align-items: center; padding-left: 13.500px; }

.taskbar { height: 50px; flex: none; display: flex; color: #fff; background: linear-gradient(90deg, #2b211d 0, #271f1b 380px, #2e231a 530px, #332a20 730px, #37332a 880px, #37332a 1060px, #382d22 1200px, #29241e 1280px, #241f1b 1450px, #271f1c 1700px, #2a1e1a 1800px, #231e1a 1920px); }
.start { width: 63px; flex: none; display: flex; align-items: center; padding-left: 20px; }
.task { width: 62px; flex: none; position: relative; display: flex; align-items: center; justify-content: center; }
.task.open::after, .task.stack::after, .task.active::after { content: ""; position: absolute; left: 6px; bottom: 0; width: 51px; height: 3px; background: #76b5ed; }
.task.stack::after { background: linear-gradient(90deg, #76b5ed 40px, #42627d 40px, #42627d 41px, #5e91bd 41px); }
.task.active { background: linear-gradient(90deg, transparent 1px, #544d48 1px, #544d48 56px, #342c28 57px, #4c443f 58px, #4c443f 62px); }
.task.active::after { left: 1px; width: 61px; background: linear-gradient(90deg, #76b5ed 56px, #42627d 56px, #42627d 57px, #5e91bd 57px); }
.count { position: absolute; display: flex; align-items: center; justify-content: center; border: 1px solid #909090; border-radius: 50%; background: #383632; color: #fff; font-weight: 600; }
.task .count { width: 25px; height: 21px; right: 3px; top: 24px; border-radius: 11px; font-size: 15px; }
.tray { flex: 1; display: flex; align-items: center; justify-content: flex-start; padding-left: 318px; }
.forecast { width: 107px; margin-left: 14px; font-family: "DejaVu Sans", sans-serif; font-size: 16.8px; }
.chevron { margin-left: 32px; }
.wifi { margin-left: 14px; }
.battery { margin-left: 10px; }
.speaker { margin-left: 9.5px; }
.lang { margin-left: 12.5px; }
.clock { width: 70px; margin-left: 15px; display: flex; flex-direction: column; align-items: center; line-height: 23px; }
.notice { position: relative; margin-left: 22px; }
.notice .count { width: 22px; height: 22px; left: 8px; top: 8px; font-size: 13.5px; }
.peek { width: 1px; height: 50px; background: #777; margin-left: 25px; }
</style>
